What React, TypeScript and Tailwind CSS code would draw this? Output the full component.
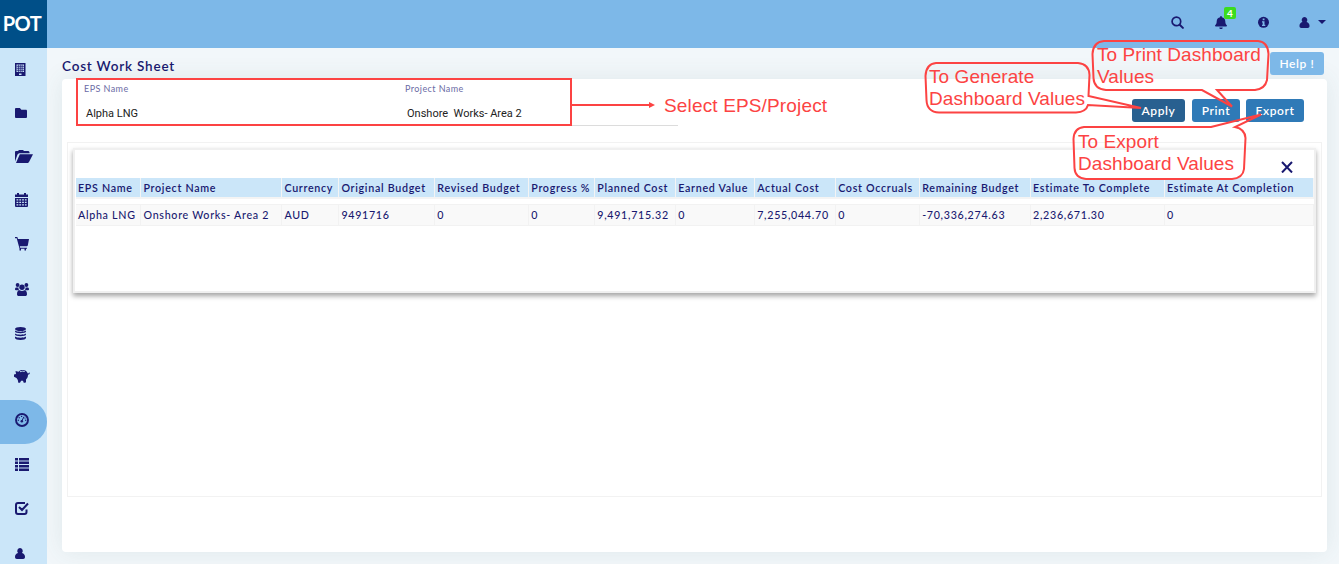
import React from "react";
import { FaFolder, FaBell } from "react-icons/fa";

type Shape = { w: number; h: number; left: number; node: React.ReactNode };

const User = (
  <path d="M5.5 0a3 3.2 0 0 1 2.2 5.4C9.8 5.8 11 7.600 11 9.800 11 11 10.200 12 9 12H2C.8 12 0 11 0 9.800 0 7.600 1.200 5.800 3.300 5.400A3 3.200 0 0 1 5.500 0z" />
);

const items: Shape[] = [
  {
    w: 11, h: 13, left: 15,
    node: (
      <>
        <path fillRule="evenodd" d="M0 0h10.500v13H0zM1.500 1.500v7.500h7.500V1.500zM4 10.500V12h2.500v-1.500z" />
        <path d="M1.500 3.300h7.500M1.500 5.300h7.500M1.500 7.300h7.500M3.400 1.500v7.500M5.250 1.500v7.500M7.100 1.500v7.500" stroke="#191970" strokeWidth=".75" />
      </>
    ),
  },
  { w: 12, h: 10, left: 15, node: null },
  { w: 18, h: 13, left: 15, node: <path d="M0 1.500L1 1h2L4 0h4l1 1h4.500l1 1v1.200H4L2.500 4.500 0 11.500zM4.800 4.300H18L14 12l-1 1H1z" /> },
  {
    w: 13, h: 14, left: 15,
    node: (
      <path fillRule="evenodd" d="M0 1.500h2V0h2v1.500h5V0h2v1.500h2V4H0zM0 5h13v8.200l-.7.800H.7L0 13.200zM1.500 6.300v1.200h1.800V6.300zm2.800 0v1.200h1.800V6.300zm2.800 0v1.200h1.800V6.300zm2.800 0v1.200h1.700V6.300zM1.500 8.700v1.200h1.800V8.700zm2.800 0v1.200h1.800V8.700zm2.800 0v1.200h1.800V8.700zm2.800 0v1.200h1.700V8.700zM1.500 11.200v1.300h1.800v-1.300zm2.800 0v1.300h1.800v-1.300zm2.800 0v1.300h1.800v-1.300zm2.800 0v1.300h1.700v-1.300z" />
    ),
  },
  {
    w: 14, h: 14, left: 15,
    node: (
      <path d="M0 0h2.300l.7 2h11l-1.200 6.600-.8.700H4.800l.4 1.400H12v1.100h-1v1.700H9.500v-1.700H6v1.700H4.500v-1.900L1.700 1.200H0z" />
    ),
  },
  {
    w: 14, h: 13, left: 15,
    node: (
      <>
        <circle cx="2.600" cy="2" r="1.900" /><circle cx="11.400" cy="2" r="1.900" /><circle cx="7" cy="4.300" r="2.700" />
        <path d="M0 6.500c0-1.500.6-2 1.500-2h2c-.2 1.200.2 2.200.8 2.800H1C.4 7.300 0 7 0 6.500zM14 6.500c0-1.500-.6-2-1.500-2h-2c.2 1.200-.2 2.200-.8 2.800H13c.6 0 1-.3 1-.8zM2 11.200C2 8.500 3 7.300 4.600 7.300c1.500 1 3.300 1 4.800 0 1.600 0 2.600 1.200 2.600 3.900 0 1.200-.7 1.800-1.700 1.800H3.700C2.700 13 2 12.400 2 11.200z" />
      </>
    ),
  },
  {
    w: 11, h: 13, left: 15,
    node: (
      <>
        <ellipse cx="5.500" cy="2" rx="5.500" ry="2" />
        <path d="M0 3.500c2 1.600 9 1.600 11 0v1c0 2.200-11 2.200-11 0zM0 6.500c2 1.600 9 1.600 11 0v1c0 2.200-11 2.200-11 0zM0 9.500c2 1.600 9 1.600 11 0V11c0 2.600-11 2.600-11 0z" />
      </>
    ),
  },
  {
    w: 16, h: 13, left: 14,
    node: (
      <path fillRule="evenodd" d="M1.500 1l3 .8C5.500.6 6.500 0 8.500 0c2.500 0 4.500 1 5.300 3.500.7 0 1-.2 1.200-1l.8.300c-.1 1.400-.8 1.900-1.800 2 0 2-.7 3.500-2 4.700V12l-.7.700H9.700L9 10.700H7L6.500 12l-.6.700H4.300l-.5-2.600L2.500 8 0 6.800V4.500l2-.6zM5.700 1.500l.5.700c1.300-.8 3-.8 4.500-.1l.4-.7c-1.700-.9-3.900-.8-5.400.1z" />
    ),
  },
  {
    w: 14, h: 14, left: 15,
    node: (
      <>
        <circle cx="7" cy="7" r="6" fill="none" stroke="#191970" strokeWidth="1.900" />
        <circle cx="6.800" cy="8.200" r="1.250" />
        <path d="M6.800 8L9 3.700" stroke="#191970" strokeWidth="1" />
        <circle cx="3.300" cy="7.300" r=".7" /><circle cx="4.200" cy="4.700" r=".7" /><circle cx="6.600" cy="3.400" r=".7" /><circle cx="10.700" cy="7.300" r=".7" /><circle cx="10" cy="5" r=".6" />
      </>
    ),
  },
  {
    w: 14, h: 13, left: 15,
    node: <path d="M0 0h3v2.400H0zM4 0h10v2.400H4zM0 3.500h3v2.400H0zM4 3.500h10v2.400H4zM0 7h3v2.400H0zM4 7h10v2.400H4zM0 10.500h3V13H0zM4 10.500h10V13H4z" />,
  },
  {
    w: 14, h: 13, left: 15,
    node: <path d="M10 1H3C1.700 1 1 1.700 1 3v7c0 1.300.7 2 2 2h6.500c1.300 0 2-.7 2-2V7.500M4 5l3 3 6-6.500" fill="none" stroke="#191970" strokeWidth="2" />,
  },
  { w: 10, h: 11, left: 15, node: <g transform="scale(.91)">{User}</g> },
];

const tops = [
  "pt-[15px]", "pt-[16px]", "pt-[14px]", "pt-[13px]", "pt-[13px]", "pt-[15px]",
  "pt-[15px]", "pt-[14px]", "pt-[13px]", "pt-[14px]", "pt-[14px]", "pt-[16px]",
];

const columns: [string, string, string][] = [
  ["EPS Name", "Alpha LNG", "w-[65px]"],
  ["Project Name", "Onshore Works- Area 2", "w-[141px]"],
  ["Currency", "AUD", "w-[57px]"],
  ["Original Budget", "9491716", "w-[96px]"],
  ["Revised Budget", "0", "w-[94px]"],
  ["Progress %", "0", "w-[66px]"],
  ["Planned Cost", "9,491,715.32", "w-[81px]"],
  ["Earned Value", "0", "w-[79px]"],
  ["Actual Cost", "7,255,044.70", "w-[81px]"],
  ["Cost Occruals", "0", "w-[84px]"],
  ["Remaining Budget", "-70,336,274.63", "w-[111px]"],
  ["Estimate To Complete", "2,236,671.30", "w-[134px]"],
  ["Estimate At Completion", "0", "w-[149px]"],
];

function Sidebar() {
  return (
    <nav className="w-[47px] shrink-0 overflow-hidden bg-[#cbe6f9]">
      {items.map((it, i) => (
        <div
          key={i}
          className={`h-[44px] ${tops[i]} ${i === 8 ? "rounded-r-[22px] bg-[#7db8e8]" : ""}`}
        >
          {it.node ? (
            <svg width={it.w} height={it.h} viewBox={`0 0 ${it.w} ${it.h}`} fill="#191970" className={`block overflow-visible ${it.left === 14 ? "ml-[14px]" : "ml-[15px]"}`}>
              {it.node}
            </svg>
          ) : (
            <FaFolder className="ml-[15px] block h-[10px] w-[12px]" preserveAspectRatio="none" viewBox="0 64 512 384" />
          )}
        </div>
      ))}
    </nav>
  );
}

function Header() {
  return (
    <header className="flex h-12 shrink-0 bg-[#7db8e8]">
      <div className="flex w-[47px] items-center justify-center bg-[#004f88] text-[20px] font-bold text-white">
        <span className="-mt-[3px] -ml-[3px] tracking-[-0.5px]">POT</span>
      </div>
      <div className="flex flex-1 items-start pt-[16px]">
        <svg width="13" height="13" viewBox="0 0 13 13" fill="none" stroke="#191970" className="ml-auto">
          <circle cx="5.400" cy="5.400" r="4.300" strokeWidth="1.700" />
          <path d="M8.700 8.700l3.200 3.200" strokeWidth="2" strokeLinecap="round" />
        </svg>
        <div className="relative ml-[31px]">
          <FaBell className="h-[13px] w-[12px]" preserveAspectRatio="none" />
          <span className="absolute -top-[9px] left-[9px] flex h-[12px] w-[12px] items-center justify-center rounded-[2px] bg-[#3bdc1e] text-[10px] leading-none font-bold text-white">4</span>
        </div>
        <svg width="11" height="12" viewBox="0 0 11 12" className="ml-[31px]">
          <circle cx="5.500" cy="6.300" r="5.500" fill="#191970" />
          <path d="M4.700 2.500h1.800v1.700H4.700zM4 5.300h2.500v3.500h.8v1.200H4V8.800h.7V6.500H4z" fill="#7db8e8" />
        </svg>
        <svg width="11" height="11" viewBox="0 0 11 12" fill="#191970" className="mt-px ml-[30px]">{User}</svg>
        <svg width="8" height="4" viewBox="0 0 8 4" fill="#191970" className="mt-[4px] mr-[13px] ml-[8px]"><path d="M0 0h8L4 4z" /></svg>
      </div>
    </header>
  );
}

function Field({ label, value, width, gap }: { label: string; value: string; width: string; gap: string }) {
  return (
    <div className={`${width} ${gap} h-[47px] border-b border-[#dcdcdc]`}>
      <div className="h-[19px] pt-[4px] text-[9px] leading-[12px] tracking-[0.43px] text-[#6b6ba5]">{label}</div>
      <div className="pt-[9px] pl-[2px] font-[Roboto,sans-serif] text-[11px] leading-[14px] whitespace-pre text-[#222]">{value}</div>
    </div>
  );
}

function Annotations() {
  return (
    <div className="pointer-events-none absolute inset-0 z-20 font-['Liberation_Sans',sans-serif] text-[19px] leading-[22px] whitespace-nowrap text-[#fc4343]">
      <svg className="absolute inset-0" width="1339" height="564" viewBox="0 0 1339 564" fill="none" stroke="#fc4343" strokeWidth="2">
        <rect x="77" y="79" width="494" height="46" />
        <path d="M572 105H650" />
        <path d="M649 102L655 105l-6 3z" fill="#fc4343" stroke="none" />
        <path d="M936 63H1078Q1089 64 1089.500 75L1088.500 96L1141 108L1088 105Q1086 112 1076 112.500H939Q927 112 926.500 100L925.500 76Q926 64 936 63Z" />
        <path d="M1104 41H1258Q1268 42 1268.500 54L1267 80Q1265 89 1255 90H1217L1232 106.500L1202 90H1106Q1094 89 1093.500 78L1092.500 54Q1093 42 1104 41Z" />
        <path d="M1084 127H1211L1261 114.500L1235 127Q1245 129 1245.500 138L1244 169Q1243 178 1232 179H1086Q1075 178 1074.500 168L1073.500 139Q1074 128 1084 127Z" />
      </svg>
      <div className="absolute top-[95px] left-[664px] tracking-[0.15px]">Select EPS/Project</div>
      <div className="absolute top-[66px] left-[929px] tracking-[0.07px]">To Generate<br />Dashboard Values</div>
      <div className="absolute top-[44px] left-[1097px] tracking-[0.07px]">To Print Dashboard<br />Values</div>
      <div className="absolute top-[131px] left-[1078px] tracking-[0.07px]">To Export<br />Dashboard Values</div>
    </div>
  );
}

const btn = "flex h-[23px] items-center justify-center rounded-[3px] text-[12px] font-semibold tracking-[0.6px] text-white";

export default function App() {
  return (
    <div className="relative flex h-[564px] w-[1339px] flex-col overflow-hidden bg-[#f2f7fa] font-[Lato,sans-serif] text-[#191970]">
      <Header />
      <div className="flex min-h-0 flex-1">
        <Sidebar />
        <main className="flex flex-1 flex-col overflow-hidden pr-[12px] pl-[15px]">
          <div className="flex h-[31px] shrink-0 justify-between">
            <h1 className="pt-[9px] text-[13.5px] leading-[18px] font-semibold tracking-[0.8px]">Cost Work Sheet</h1>
            <button className={`${btn} relative z-10 mt-[4px] mr-[3px] w-[54px] bg-[#7db8e8]`}>Help !</button>
          </div>
          <section className="h-[473px] shrink-0 rounded-[4px] bg-white px-[5px] shadow-[0_0_25px_rgba(60,100,100,0.10)]">
            <div className="flex h-[63px]">
              <Field label="EPS Name" value="Alpha LNG" width="w-[273px]" gap="ml-[17px]" />
              <Field label="Project Name" value="Onshore  Works- Area 2" width="w-[273px]" gap="ml-[48px]" />
              <div className="mt-[20px] mr-[18px] ml-auto flex">
                <button className={`${btn} mr-[7px] w-[53px] bg-[#286090]`}>Apply</button>
                <button className={`${btn} mr-[6px] w-[48px] bg-[#2f7ab7]`}>Print</button>
                <button className={`${btn} w-[58px] bg-[#2f7ab7]`}>Export</button>
              </div>
            </div>
            <div className="h-[355px] border border-[#f2f2f2] px-[5px] pt-[5px]">
              <div className="h-[145px] border-2 border-[#f0f0f0] bg-white shadow-[0_3px_5px_0_rgba(0,0,0,0.36)]">
                <div className="flex h-[28px] justify-end pt-[11px] pr-[21px]">
                  <svg width="12" height="12" viewBox="0 0 12 12" stroke="#191970" strokeWidth="2"><path d="M1 1l10 10.500M11 1L1 11.500" /></svg>
                </div>
                <table className="ml-px table-fixed border-collapse text-[10.7px] leading-[13px] tracking-[0.7px] whitespace-nowrap">
                  <thead>
                    <tr className="h-[20px] bg-[#cbe6f9] text-left">
                      {columns.map(([name, , w]) => (
                        <th key={name} className={`${w} border-r border-[#f4f4f4] p-0 pl-[2px] font-semibold`}>{name}</th>
                      ))}
                    </tr>
                  </thead>
                  <tbody>
                    <tr className="h-[6px] border-t-2 border-[#f4f4f4]"><td colSpan={13} className="p-0" /></tr>
                    <tr className="h-[21px] border-y border-[#f2f2f2] bg-[#f9f9f9] font-medium">
                      {columns.map(([name, value]) => (
                        <td key={name} className="border-r border-[#f2f2f2] p-0 pl-[2px]">{value}</td>
                      ))}
                    </tr>
                  </tbody>
                </table>
              </div>
            </div>
          </section>
        </main>
      </div>
      <Annotations />
    </div>
  );
}
